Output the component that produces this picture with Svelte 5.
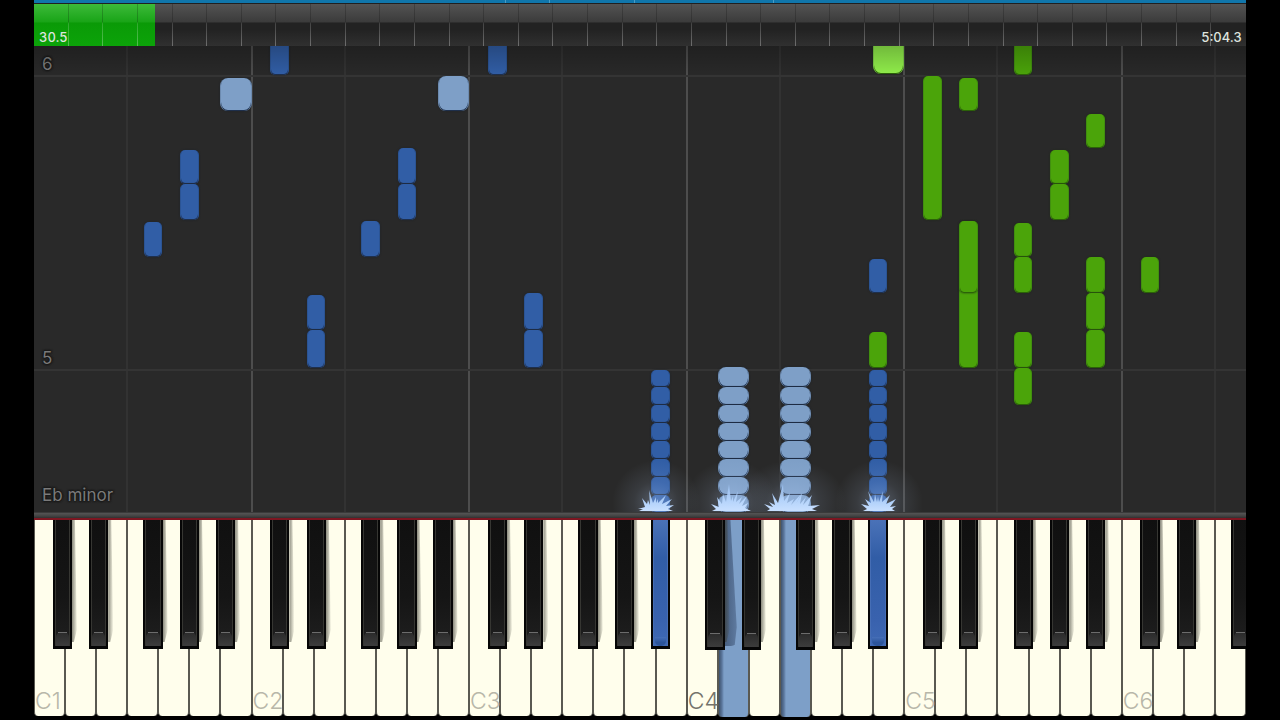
<script lang="ts">
  type Hand = 'left' | 'right'
  interface Note { pitch: string; top: number; bottom: number; hand: Hand }

  const WHITE_COUNT = 39
  const ROLL_UNITS = 466
  const BLACK_WIDTH = 0.62
  const NOTE_WIDTH = 0.6
  const WHITE_NAMES = ['C', 'D', 'E', 'F', 'G', 'A', 'B']

  // centre of each black key, counted in white keys from the octave's C
  const BLACK_CENTRES: Record<string, number> = {
    'C#': 0.91, 'D#': 2.08, 'F#': 3.83, 'G#': 5, 'A#': 6.16,
  }

  const pressed = ['A#3', 'D4', 'F4', 'A#4']
  const lowered = ['C#4', 'D#4', 'F#4']
  const duration = 304.3
  let position = $state(30.5)

  const pct = (keys: number) => (keys / WHITE_COUNT) * 100

  const whiteKeys = Array.from({ length: WHITE_COUNT }, (_, i) => WHITE_NAMES[i % 7] + (Math.floor(i / 7) + 1))

  const blackKeys = [1, 2, 3, 4, 5, 6]
    .flatMap((octave) => Object.keys(BLACK_CENTRES).map((name) => ({
      pitch: name + octave,
      left: (octave - 1) * 7 + BLACK_CENTRES[name] - BLACK_WIDTH / 2,
    })))
    .filter((key) => key.left < WHITE_COUNT)

  const lanes = Array.from({ length: WHITE_COUNT }, (_, i) => i)
    .filter((i) => i > 0 && (i % 7 === 0 || i % 7 === 3))

  const bars = [
    { label: '6', y: 30 },
    { label: '5', y: 324 },
  ]

  function notes(hand: Hand, pitch: string, ...spans: [number, number][]): Note[] {
    return spans.map(([top, bottom]) => ({ pitch, top, bottom, hand }))
  }

  const repeats: [number, number][] = [
    [324, 341], [341, 359], [359, 377], [377, 395],
    [395, 413], [413, 431], [431, 449], [449, 467],
  ]
  const wideRepeats: [number, number][] = [[321, 341], ...repeats.slice(1)]

  const score: Note[] = [
    ...notes('left', 'F#1', [176, 211]),
    ...notes('left', 'G#1', [104, 138], [138, 174]),
    ...notes('left', 'B1', [32, 65]),
    ...notes('left', 'C#2', [-8, 29]),
    ...notes('left', 'D#2', [249, 284], [284, 322]),
    ...notes('left', 'F#2', [175, 211]),
    ...notes('left', 'G#2', [102, 138], [138, 174]),
    ...notes('left', 'B2', [30, 65]),
    ...notes('left', 'C#3', [-8, 29]),
    ...notes('left', 'D#3', [247, 284], [284, 322]),
    ...notes('left', 'A#3', ...repeats),
    ...notes('left', 'D4', ...wideRepeats),
    ...notes('left', 'F4', ...wideRepeats),
    ...notes('left', 'A#4', [213, 247], ...repeats),
    ...notes('right', 'A#4', [286, 322]),
    ...notes('right', 'B4', [-8, 28]),
    ...notes('right', 'C#5', [30, 174]),
    ...notes('right', 'D#5', [32, 65], [175, 322], [175, 247]),
    ...notes('right', 'F#5', [-8, 29], [177, 211], [211, 247], [286, 322], [322, 359]),
    ...notes('right', 'G#5', [104, 138], [138, 174]),
    ...notes('right', 'A#5', [68, 102], [211, 247], [247, 284], [284, 322]),
    ...notes('right', 'C#6', [211, 247]),
  ]

  const sparks = [
    { x: 19.44, width: 36, d: 'M1 27 L5 25 L0 25 L7 23 L4 14 L9 20 L10 16 L12 21 L11 6 L15 19 L18 13 L18 19 L20 15 L20 19 L28 11 L24 20 L34 15 L28 22 L36 21 L30 25 L35 27Z' },
    { x: 21.79, width: 40, d: 'M1 27 L5 25 L0 20 L8 23 L6 13 L11 20 L12 10 L15 18 L18 0 L20 17 L22 12 L22 18 L27 7 L25 18 L31 13 L28 20 L36 12 L31 22 L37 19 L34 24 L40 27Z' },
    { x: 23.49, width: 56, d: 'M3 27 L6 25 L0 20 L9 23 L5 18 L11 21 L8 9 L14 19 L19 0 L20 17 L26 9 L23 19 L30 15 L27 21 L37 10 L32 20 L38 9 L36 20 L42 13 L39 21 L48 11 L44 22 L56 21 L48 25 L53 27Z' },
    { x: 26.6, width: 36, d: 'M2 27 L6 25 L0 20 L8 22 L4 15 L10 19 L7 7 L13 18 L14 10 L16 18 L17 12 L18 18 L22 7 L21 18 L29 11 L25 20 L35 15 L29 23 L35 22 L31 25 L34 27Z' },
  ]

  const isBlack = (pitch: string) => pitch.includes('#')

  function noteLeft(pitch: string) {
    const octave = Number(pitch.slice(-1)) - 1
    const name = pitch.slice(0, -1)
    return isBlack(pitch)
      ? octave * 7 + BLACK_CENTRES[name] - NOTE_WIDTH / 2
      : octave * 7 + WHITE_NAMES.indexOf(name)
  }

  function noteStyle(note: Note) {
    const width = isBlack(note.pitch) ? NOTE_WIDTH : 1
    const top = (note.top / ROLL_UNITS) * 100
    const height = ((note.bottom - note.top) / ROLL_UNITS) * 100
    return `left:${pct(noteLeft(note.pitch))}%;width:${pct(width)}%;top:${top}%;height:${height}%`
  }

  function clock(seconds: number) {
    const minutes = Math.floor(seconds / 60)
    const rest = (seconds % 60).toFixed(1)
    return minutes ? `${minutes}:${rest.padStart(4, '0')}` : rest
  }
</script>

<main class="player">
  <div class="overview">
    {#each [38.9, 42.5, 49.5, 61] as x}
      <i style="left:{x}%"></i>
    {/each}
  </div>

  <div class="timeline" style="--played:{(position / duration) * 100}%">
    <input type="range" min="0" max={duration} step="0.1" bind:value={position} aria-label="Song position" />
    <div class="ticks">
      {#each { length: 35 } as _}<span></span>{/each}
    </div>
    <div class="times">
      <span>{clock(position)}</span>
      <span>{clock(duration)}</span>
    </div>
  </div>

  <section class="roll">
    {#each lanes as lane}
      <div class="lane" class:octave={lane % 7 === 0} style="left:{pct(lane)}%"></div>
    {/each}
    {#each bars as bar}
      <div class="bar" style="top:{(bar.y / ROLL_UNITS) * 100}%"><span>{bar.label}</span></div>
    {/each}
    {#each score as note}
      <div class="note {note.hand}" class:wide={!isBlack(note.pitch)} style={noteStyle(note)}></div>
    {/each}
    <div class="shade"></div>
    {#each sparks as spark, i}
      <div class="spark" style="left:{pct(spark.x)}%">
        <svg width={spark.width} height="27" viewBox="0 0 {spark.width} 27" aria-hidden="true">
          <defs>
            <linearGradient id="spark{i}" x1="0" y1="0" x2="0" y2="1">
              <stop offset="0" stop-color="#9fc4f5" stop-opacity=".75" />
              <stop offset=".6" stop-color="#b4d3fb" />
              <stop offset="1" stop-color="#c9e0ff" />
            </linearGradient>
          </defs>
          <path d={spark.d} fill="url(#spark{i})" />
        </svg>
      </div>
    {/each}
    <div class="signature">Eb minor</div>
  </section>

  <div class="rail"></div>

  <section class="keyboard" aria-label="Piano keyboard">
    {#each whiteKeys as pitch}
      <button class="white" class:down={pressed.includes(pitch)} class:shaded={pitch === 'D4'} aria-label={pitch}>
        {#if pitch[0] === 'C'}<span class:middle={pitch === 'C4'}>{pitch}</span>{/if}
      </button>
    {/each}
    {#each blackKeys as key}
      <button
        class="black"
        class:down={pressed.includes(key.pitch)}
        class:low={lowered.includes(key.pitch)}
        style="left:{pct(key.left)}%;width:{pct(BLACK_WIDTH)}%"
        aria-label={key.pitch}
      ><i></i></button>
    {/each}
  </section>
</main>

<style>
  :global(body) { background: #000; }

  .player {
    display: flex;
    flex-direction: column;
    box-sizing: border-box;
    min-height: 100vh;
    padding: 0 34px 3px;
    background: #000;
    font-family: Inter, "Liberation Sans", sans-serif;
  }

  .overview {
    position: relative;
    height: 3px;
    background: #1076ab;
  }
  .overview i {
    position: absolute;
    top: 0;
    width: 1px;
    height: 3px;
    background: #4a9cc4;
  }

  .timeline {
    display: grid;
    height: 43px;
    box-sizing: border-box;
    border-top: 1px solid #202020;
    background: linear-gradient(#535353, #3b3b3b 43%, #222 45%, #222 60%, #303030);
  }
  .timeline > * { grid-area: 1 / 1; }

  .timeline input {
    appearance: none;
    width: 100%;
    height: 100%;
    margin: 0;
    background: linear-gradient(#3dba3a, #19a417 43%, #0a9a07 45%, #0ca309) no-repeat 0 0 / var(--played) 100%;
    cursor: pointer;
  }
  .timeline input::-webkit-slider-thumb { appearance: none; width: 1px; height: 42px; }

  .ticks {
    display: flex;
    pointer-events: none;
  }
  .ticks span {
    flex: 1;
    background: linear-gradient(rgba(0, 0, 0, 0.2) 42%, rgba(255, 255, 255, 0.16) 47%, rgba(255, 255, 255, 0.3)) no-repeat 100% 0 / 1px 100%;
  }
  .ticks span:last-child { background: none; }

  .times {
    display: flex;
    align-items: flex-end;
    justify-content: space-between;
    padding: 0 4px 1px 5px;
    color: #dfe4df;
    font-size: 13px;
    font-weight: 500;
    line-height: 16px;
    font-variant-numeric: tabular-nums;
    pointer-events: none;
  }

  .roll {
    position: relative;
    flex: 1;
    min-height: 320px;
    overflow: hidden;
    background: #292929;
  }

  .lane {
    position: absolute;
    top: 0;
    bottom: 0;
    width: 2px;
    margin-left: -1px;
    background: #323232;
  }
  .lane.octave { background: #4d4d4d; }

  .bar {
    position: absolute;
    left: 0;
    right: 0;
    height: 2px;
    margin-top: -1px;
    background: #343434;
  }
  .bar span {
    position: absolute;
    left: 8px;
    bottom: 3px;
  }
  .bar span, .signature {
    color: #7a7a7a;
    font-size: 17px;
    line-height: 20px;
    text-shadow: 0 0 2px #111, 0 0 2px #111, 0 0 3px #111;
  }
  .signature {
    position: absolute;
    left: 8px;
    bottom: 7px;
  }

  .note {
    position: absolute;
    box-sizing: border-box;
    border: solid rgba(14, 26, 44, 0.15);
    border-width: 0 1px;
    border-radius: 5px;
    box-shadow: inset 0 -1px #1e2f4c, 0 0 2px #1c232c;
  }
  .note.left { background-color: #315ea6; }
  .note.right {
    background-color: #4ba40a;
    box-shadow: inset 0 -1px #2b6208, 0 0 2px #1f2b17;
  }
  .note.wide { border-radius: 8px; }
  .note.left.wide { background-color: #7e9fc7; }
  .note.right.wide { background-color: #91ee4b; }

  .shade {
    position: absolute;
    inset: 0 0 auto;
    height: 30px;
    background: linear-gradient(rgba(0, 0, 0, 0.22), transparent);
  }

  .spark {
    position: absolute;
    bottom: 1px;
    height: 27px;
  }
  .spark::before {
    content: '';
    position: absolute;
    inset: -24px -26px -34px;
    background: radial-gradient(closest-side, rgba(190, 215, 255, 0.3), rgba(190, 215, 255, 0.1) 50%, transparent);
  }
  .spark svg {
    position: relative;
    display: block;
  }

  .rail {
    height: 8px;
    box-sizing: border-box;
    border-top: 1px solid #3a3a3a;
    border-bottom: 2px solid #7d1621;
    background: linear-gradient(#555, #434343 60%, #303030);
  }

  .keyboard {
    position: relative;
    display: flex;
    height: 197px;
    overflow: hidden;
    background: #000;
  }

  button {
    padding: 0;
    border: 0;
    font: inherit;
    cursor: pointer;
  }

  .white {
    position: relative;
    flex: 1;
    min-width: 0;
    height: 196px;
    border: solid #5a5951;
    border-width: 0 1px 0 1px;
    border-radius: 0 0 4px 4px;
    background: #fffeec;
  }
  .white span {
    position: absolute;
    left: 0;
    bottom: 2px;
    z-index: 1;
    color: #b8b7a9;
    font-size: 23px;
    font-weight: 300;
    line-height: 26px;
  }
  .white span.middle { color: #74736b; }

  .white.down {
    height: 197px;
    background: linear-gradient(to right, #3f536e, #5b779d 3px, #7d9fc8 5px);
  }
  .white.shaded::before {
    content: '';
    position: absolute;
    top: 0;
    left: 4px;
    width: 14px;
    height: 126px;
    background: linear-gradient(to right, #445b7b, #5f7ba1);
    border-radius: 0 0 6px 0;
    clip-path: polygon(0 0, 55% 0, 100% 85%, 85% 100%, 0 100%);
  }

  .black {
    position: absolute;
    top: 0;
    height: 129px;
    background: #060606;
  }
  .black::before {
    content: '';
    position: absolute;
    top: 0;
    left: 100%;
    width: 5px;
    height: 122px;
    background: linear-gradient(to right, rgba(60, 60, 50, 0.6), rgba(60, 60, 50, 0.05));
    clip-path: polygon(0 0, 60% 0, 100% 90%, 40% 100%, 0 100%);
  }
  .black i {
    position: absolute;
    inset: 0 2px 3px;
    border: solid #363632;
    border-width: 0 1px;
    background: linear-gradient(#101010, #151515 60%, #1f1f1f);
  }
  .black i::before {
    content: '';
    position: absolute;
    left: 0;
    right: 0;
    bottom: 0;
    height: 14px;
    border-radius: 5px 5px 0 0;
    background: linear-gradient(#2a2a2a, #3c3c3c);
  }
  .black i::after {
    content: '';
    position: absolute;
    left: 2px;
    right: 2px;
    bottom: 13px;
    height: 1px;
    background: #6c6c6c;
  }

  .black.low { height: 130px; }

  .black.down i {
    border-color: #466eb5;
    background: linear-gradient(#4a72b8, #315da6 30%, #3962ae 80%, #3f69b4);
  }
  .black.down i::before {
    left: 1px;
    right: 1px;
    height: 9px;
    border-radius: 0 0 5px 5px;
    background: linear-gradient(#466fb8, #2c559b 60%);
  }
  .black.down i::after { display: none; }
  .black.down::before { display: none; }
</style>
